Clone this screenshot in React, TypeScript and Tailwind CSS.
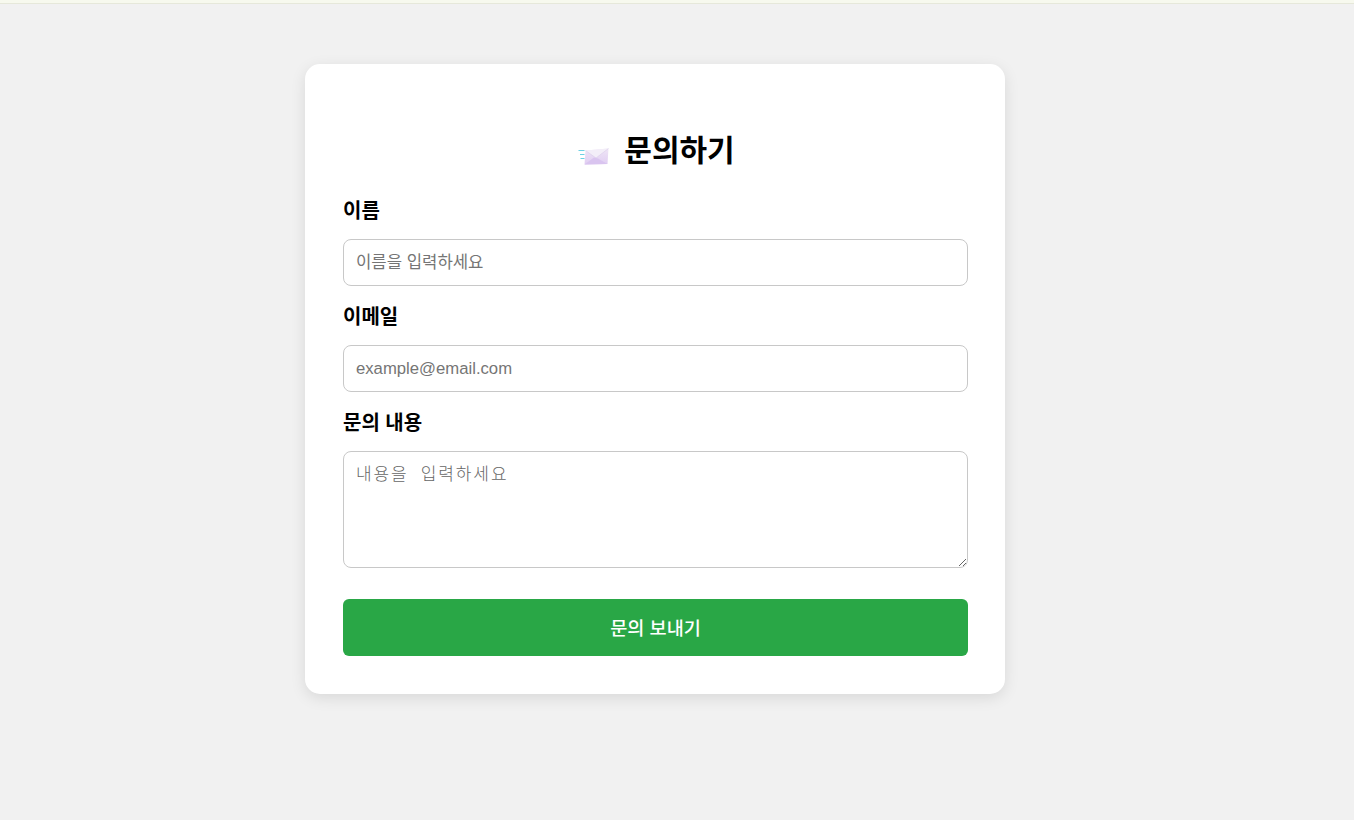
const sans = 'font-["Liberation_Sans","Noto_Sans_CJK_KR",sans-serif]'

function EnvelopeIcon() {
  return (
    <svg width="32" height="20" viewBox="0 0 32 20" className="shrink-0">
      <defs>
        <linearGradient id="body" x1="0" y1="0" x2="0" y2="1">
          <stop offset="0" stopColor="#efe6f6" />
          <stop offset="1" stopColor="#e0cdf2" />
        </linearGradient>
      </defs>
      <path d="M7.5 4.5 L30.5 2.5 L29.5 18 L6.5 18.5 Z" fill="url(#body)" />
      <path d="M7.5 4.5 L18 12 L30.5 2.5" fill="#f3eef8" stroke="#dacdea" strokeWidth="0.6" />
      <path d="M6.5 18.5 L16 11.5 L20 12.5 L29.5 18 Z" fill="#d9c4ef" />
      <path d="M0.5 4.5 H6.5 M2 8.5 H6.5 M2.5 12.5 H6.5" stroke="#6dd0e4" strokeWidth="1.2" />
    </svg>
  )
}

export default function App() {
  return (
    <div className={`min-h-[820px] bg-[#f1f1f1] ${sans} text-black`}>
      <div className="h-[4px] bg-[#f7f9ee] border-b border-[#e6e8da]" />
      <main className="flex pl-[305px] pt-[60px]">
        <form className="w-[700px] h-[630px] bg-white rounded-[15px] shadow-[0_4px_15px_rgba(0,0,0,0.1)] pl-[38px] pr-[37px] pt-[65px]">
          <h1 className="flex items-center justify-center gap-[14px] h-[44px] text-[30px] font-bold leading-[44px] pl-[2px]">
            <span className="mt-[9px]"><EnvelopeIcon /></span>
            <span>문의하기</span>
          </h1>

          <label className="block mt-[23px] h-[32px] text-[20px] font-bold leading-[30px]">이름</label>
          <input
            placeholder="이름을 입력하세요"
            className="block w-full h-[47px] mt-[11px] px-[12px] border border-[#c8c8c8] rounded-[8px] text-[16.7px] outline-none placeholder:text-[#757575]"
          />

          <label className="block mt-[16px] h-[32px] text-[20px] font-bold leading-[30px]">이메일</label>
          <input
            placeholder="example@email.com"
            className="block w-full h-[47px] mt-[11px] px-[12px] border border-[#c8c8c8] rounded-[8px] text-[16.7px] outline-none placeholder:text-[#757575]"
          />

          <label className="block mt-[16px] h-[32px] text-[20px] font-bold leading-[30px]">문의 내용</label>
          <textarea
            placeholder="내용을 입력하세요"
            className='block w-full h-[117px] mt-[11px] px-[12px] py-[13px] border border-[#c8c8c8] rounded-[8px] text-[17px] leading-[22px] tracking-[1.9px] outline-none resize-y placeholder:text-[#666666] font-["Liberation_Mono","Noto_Sans_CJK_KR",monospace] font-light'
          />

          <button
            type="button"
            className="block w-full h-[57px] mt-[31px] pt-[3px] bg-[#29a746] text-white rounded-[6px] text-[18.6px] font-medium"
          >
            문의 보내기
          </button>
        </form>
      </main>
    </div>
  )
}
